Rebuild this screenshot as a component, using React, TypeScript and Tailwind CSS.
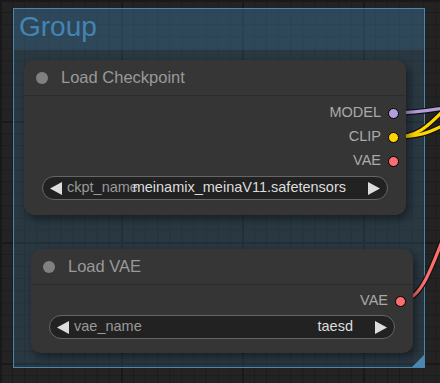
import React from "react";

type Slot = { name: string; color: string };
type NodeProps = {
  title: string;
  slots: Slot[];
  label: string;
  value: string;
  className?: string;
  bodyClass: string;
  widgetClass: string;
};

const ArrowLeft = () => (
  <svg width="12" height="13" viewBox="0 0 12 13" className="shrink-0">
    <polygon points="12,0 12,13 0,6.5" fill="#dddddd" />
  </svg>
);

const ArrowRight = () => (
  <svg width="12" height="13" viewBox="0 0 12 13" className="shrink-0">
    <polygon points="0,0 0,13 12,6.5" fill="#dddddd" />
  </svg>
);

const GraphNode = ({ title, slots, label, value, className, bodyClass, widgetClass }: NodeProps) => (
  <div
    className={`relative z-[2] w-[382px] rounded-[10px] bg-[#353535] shadow-[3px_4px_8px_rgba(0,0,0,0.45)] ${className ?? ""}`}
  >
    <div className="flex h-[36px] items-center rounded-t-[10px] border-b border-[#2d2d2d] bg-[#363636] pl-[12px]">
      <span className="h-[12px] w-[12px] rounded-full bg-[#808080]" />
      <span className="ml-[13px] text-[16.5px] text-[#999]">{title}</span>
    </div>
    <div className={bodyClass}>
      {slots.map((s) => (
        <div key={s.name} className="flex h-[24px] items-center justify-end pr-[7px]">
          <span className="text-[14.5px] text-[#aaa]">{s.name}</span>
          <span
            className="ml-[7px] h-[11px] w-[11px] rounded-full border border-black"
            style={{ backgroundColor: s.color }}
          />
        </div>
      ))}
      <div
        className={`mx-[18px] flex h-[24px] items-center rounded-full border border-[#666] bg-[#222] px-[7px] text-[14.5px] ${widgetClass}`}
      >
        <ArrowLeft />
        <span className="ml-[5px] shrink-0 whitespace-nowrap text-[#999]">{label}</span>
        <div className="flex min-w-0 flex-1 justify-end pr-[22px]">
          <span className="whitespace-nowrap text-[#ddd]">{value}</span>
        </div>
        <ArrowRight />
      </div>
    </div>
  </div>
);

const Wires = () => (
  <svg
    width="440"
    height="383"
    viewBox="0 0 440 383"
    className="pointer-events-none absolute left-0 top-0 z-[1]"
  >
    <g fill="none" stroke="#111" strokeWidth="5.5" strokeLinecap="round">
      <path d="M394,113 C415,113 425,111 444,108" />
      <path d="M394,137 C418,137 428,126 444,110" />
      <path d="M394,137 C418,137 428,133 444,125" />
      <path d="M400,301 C420,301 430,272 444,236" />
    </g>
    <g fill="none" strokeWidth="3.2" strokeLinecap="round">
      <path d="M394,113 C415,113 425,111 444,108" stroke="#b39ddb" />
      <path d="M394,137 C418,137 428,126 444,110" stroke="#ffd500" />
      <path d="M394,137 C418,137 428,133 444,125" stroke="#ffd500" />
      <path d="M400,301 C420,301 430,272 444,236" stroke="#ff6e6e" />
    </g>
  </svg>
);

const App = () => {
  return (
    <div
      className="relative h-[383px] w-[440px] overflow-hidden bg-[#232323] bg-[image:linear-gradient(to_right,#191919_2px,transparent_2px),linear-gradient(to_bottom,#191919_2px,transparent_2px),linear-gradient(to_right,#1c1c1c_1px,transparent_1px),linear-gradient(to_bottom,#1c1c1c_1px,transparent_1px)] bg-[size:121px_121px,121px_121px,12.1px_12.1px,12.1px_12.1px] pl-[13px] pt-[8px] font-['Liberation_Sans',Arial,sans-serif]"
    >
      <div className="relative flex h-[360px] w-[412px] flex-col border border-[#4a86b0] bg-[#3f789e]/25">
        <div className="h-[41px] bg-[#3f789e]/25 pl-[5px] pt-[2px] text-[28px] leading-[32px] text-[#4384b5]">
          Group
        </div>
        <GraphNode
          title="Load Checkpoint"
          className="ml-[10px] mt-[10px]"
          bodyClass="pt-[5px] pb-[15px]"
          widgetClass="mt-[3px]"
          slots={[
            { name: "MODEL", color: "#b39ddb" },
            { name: "CLIP", color: "#ffd500" },
            { name: "VAE", color: "#ff6e6e" },
          ]}
          label="ckpt_name"
          value="meinamix_meinaV11.safetensors"
        />
        <GraphNode
          title="Load VAE"
          className="ml-[17px] mt-[34px]"
          bodyClass="pt-[4px] pb-[14px]"
          widgetClass="mt-[2px]"
          slots={[{ name: "VAE", color: "#ff6e6e" }]}
          label="vae_name"
          value="taesd"
        />
        <svg width="12" height="12" viewBox="0 0 12 12" className="absolute bottom-0 right-0">
          <polygon points="12,0 12,12 0,12" fill="#4a86b0" />
        </svg>
      </div>
      <Wires />
    </div>
  );
};

export default App;
